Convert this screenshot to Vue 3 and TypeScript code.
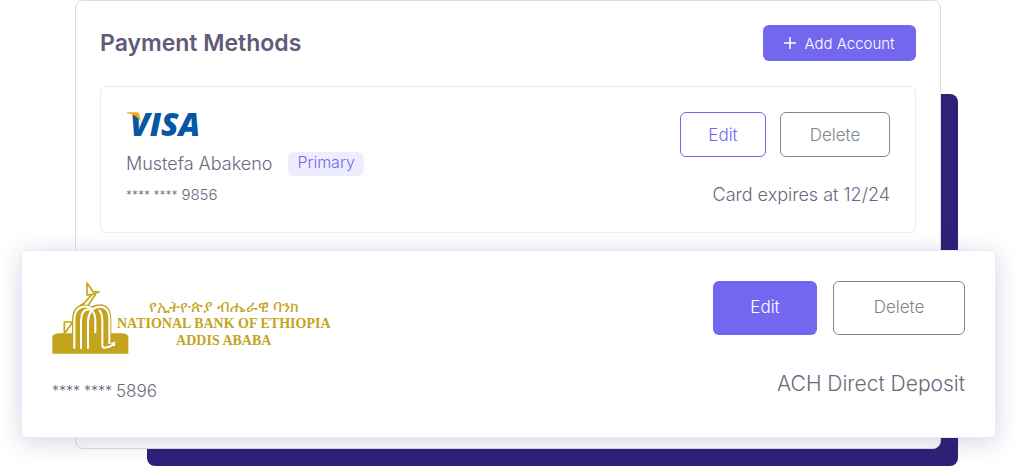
<script setup lang="ts">
interface Account {
  hidden: string
  digits: string
  note: string
}

const card: Account & { holder: string } = {
  holder: 'Mustefa Abakeno',
  hidden: '**** ****',
  digits: '9856',
  note: 'Card expires at 12/24',
}

const bank: Account & { lines: string[] } = {
  lines: ['NATIONAL BANK OF ETHIOPIA', 'ADDIS ABABA'],
  hidden: '**** ****',
  digits: '5896',
  note: 'ACH Direct Deposit',
}
</script>

<template>
  <main class="scene">
    <div class="backdrop"></div>
    <div class="panel"></div>

    <section class="content">
      <header class="head">
        <h1>Payment Methods</h1>
        <button type="button" class="btn solid add">
          <svg width="12" height="12" viewBox="0 0 12 12" aria-hidden="true">
            <path d="M6 0.5V11.5M0.5 6H11.5" stroke="currentColor" stroke-width="1.5" stroke-linecap="round" />
          </svg>
          Add Account
        </button>
      </header>

      <article class="card">
        <div class="info">
          <div class="visa">
            VISA
            <svg class="flick" width="14" height="10" viewBox="0 0 42 30" aria-hidden="true">
              <path d="M0 1H27Q36 1 37 8L42 30Q30 9 0 3Z" fill="#f9a51a" />
            </svg>
          </div>
          <div class="holder">
            <span>{{ card.holder }}</span>
            <span class="badge">Primary</span>
          </div>
          <div class="mask">
            <span class="stars">{{ card.hidden }}</span>
            <span>{{ card.digits }}</span>
          </div>
        </div>
        <div class="side">
          <div class="actions">
            <button type="button" class="btn outline">Edit</button>
            <button type="button" class="btn muted">Delete</button>
          </div>
          <div class="note">{{ card.note }}</div>
        </div>
      </article>
    </section>

    <article class="front">
      <div class="info">
        <div class="bank">
          <svg width="77" height="72" viewBox="37 36 231 216" fill="none" aria-hidden="true">
            <path d="M38 251V199Q42 190 60 190H244Q262 190 266 199V251Z" fill="#c4a41c" />
            <path d="M74 190V156H98M76 188L98 158" stroke="#c4a41c" stroke-width="5" />
            <path d="M142 39V75L158 73L178 66L160 65Z" stroke="#c4a41c" stroke-width="5" stroke-linejoin="round" />
            <path d="M168 72L144 108M157 73L134 99Q128 104 120 108" stroke="#c4a41c" stroke-width="5" />
            <path
              d="M97 192V148Q99 106 129 104Q145 102 156 109Q166 103 184 103Q214 106 215 146V192Z"
              fill="#c4a41c"
            />
            <g stroke="#fff" stroke-width="6">
              <path d="M104 236V148Q106 112 132 110Q148 108 160 118" />
              <path d="M124 236V152Q125 120 146 118Q164 118 167 147V190" />
              <path d="M145 236V152Q148 113 179 110Q208 109 209 148V222" />
              <path d="M188 190V150Q187 128 178 120" />
              <path d="M188 188V226Q188 236 201 232Q218 229 223 219L215 222M223 218V228" />
            </g>
          </svg>
          <div class="bank-name">
            <span class="amharic" lang="am">የኢትዮጵያ ብሔራዊ ባንክ</span>
            <span v-for="line in bank.lines" :key="line">{{ line }}</span>
          </div>
        </div>
        <div class="mask">
          <span class="stars">{{ bank.hidden }}</span>
          <span>{{ bank.digits }}</span>
        </div>
      </div>
      <div class="side">
        <div class="actions">
          <button type="button" class="btn solid">Edit</button>
          <button type="button" class="btn muted">Delete</button>
        </div>
        <div class="note">{{ bank.note }}</div>
      </div>
    </article>
  </main>
</template>

<style>
body {
  background: #fff;
}
</style>

<style scoped>
.scene {
  display: grid;
  grid-template-columns: 21px 54px 72px 1fr 17px 38px 28px;
  grid-template-rows: 94px auto auto 11px 17px;
  font-family: Inter, "Noto Sans", "Liberation Sans", sans-serif;
  font-weight: 300;
  color: #6b687d;
  overflow: hidden;
}

.backdrop {
  grid-area: 2 / 4 / 6 / 6;
  background: #302078;
  border-radius: 8px;
}

.panel {
  grid-area: 1 / 3 / 5 / 5;
  background: #fff;
  border: 1px solid #dcdce0;
  border-radius: 8px;
}

.content {
  grid-area: 1 / 3 / 3 / 5;
  padding: 25px 25px 17px;
}

.head {
  display: flex;
  justify-content: space-between;
  align-items: center;
  margin-bottom: 25px;
}

h1 {
  margin: 0;
  font-size: 23px;
  line-height: 36px;
  font-weight: 600;
  color: #5f5b78;
}

.btn {
  display: flex;
  align-items: center;
  justify-content: center;
  box-sizing: border-box;
  padding: 0;
  border: 1px solid transparent;
  border-radius: 6px;
  font: inherit;
  font-size: 17px;
  background: #fff;
}

.solid {
  background: #7367f0;
  color: #fff;
}

.outline {
  border-color: #7367f0;
  color: #7367f0;
}

.muted {
  border-color: #82868b;
  color: #82868b;
}

.add {
  width: 153px;
  height: 36px;
  gap: 8px;
  font-size: 15px;
}

.card,
.front {
  display: flex;
  justify-content: space-between;
  box-sizing: border-box;
}

.card {
  height: 147px;
  padding: 25px;
  border: 1px solid #ebe9f1;
  border-radius: 6px;
}

.visa {
  position: relative;
  height: 24px;
  padding-left: 4px;
  font-family: "Open Sans", sans-serif;
  font-size: 32px;
  line-height: 24px;
  font-weight: 800;
  font-style: italic;
  color: #0857a5;
}

.flick {
  position: absolute;
  left: 1px;
  top: 0;
}

.holder {
  display: flex;
  align-items: center;
  gap: 16px;
  margin-top: 16px;
  font-size: 18px;
  line-height: 24px;
}

.badge {
  box-sizing: border-box;
  height: 24px;
  padding: 0 9px;
  border-radius: 6px;
  background: #eeedfd;
  color: #7367f0;
  font-size: 16px;
  line-height: 20px;
}

.mask {
  display: flex;
  gap: 4px;
}

.card .mask {
  margin-top: 9px;
  font-size: 15px;
  line-height: 20px;
}

.card .stars {
  font-size: 12px;
}

.side {
  display: flex;
  flex-direction: column;
  align-items: flex-end;
}

.actions {
  display: flex;
  gap: 14px;
}

.card .btn {
  width: 86px;
  height: 45px;
}

.card .muted {
  width: 110px;
}

.card .note {
  margin-top: 26px;
  font-size: 18px;
  line-height: 24px;
}

.front {
  grid-area: 3 / 2 / 4 / 7;
  height: 188px;
  padding: 30px;
  border: 1px solid #ebe9f1;
  border-radius: 6px;
  background: #fff;
  box-shadow: 0 4px 24px rgba(48, 32, 120, 0.2);
}

.bank {
  display: flex;
  align-items: flex-start;
  height: 74px;
}

.bank svg {
  margin-top: 1px;
  flex: none;
}

.bank-name {
  display: flex;
  flex-direction: column;
  align-items: center;
  margin: 17px 0 0 -12px;
  color: #c4a41c;
  font-family: "Liberation Serif", serif;
  font-size: 14px;
  line-height: 17px;
  font-weight: 700;
  white-space: nowrap;
}

.amharic {
  font-size: 16px;
  font-weight: 400;
}

.front .mask {
  margin-top: 24px;
  font-size: 17px;
  line-height: 24px;
}

.front .stars {
  font-size: 14px;
}

.front .actions {
  gap: 16px;
}

.front .btn {
  width: 104px;
  height: 54px;
  padding-bottom: 2px;
}

.front .muted {
  width: 132px;
}

.front .note {
  margin-top: 36px;
  font-size: 21px;
  line-height: 26px;
}
</style>
